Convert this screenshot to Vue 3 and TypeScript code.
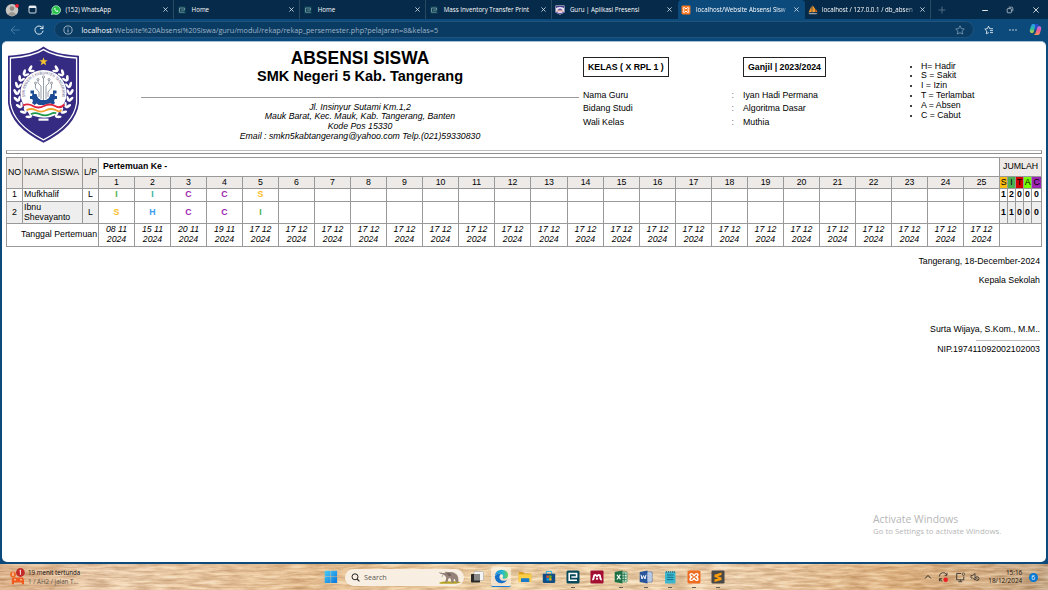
<script setup lang="ts">
interface Tab { title: string; icon: string; active?: boolean }
interface Student { no: number; name: string; gender: string; marks: string[]; totals: number[] }

const tabs: Tab[] = [
  { title: '(152) WhatsApp', icon: 'wa' },
  { title: 'Home', icon: 'e' },
  { title: 'Home', icon: 'e' },
  { title: 'Mass Inventory Transfer Print', icon: 'e' },
  { title: 'Guru | Aplikasi Presensi', icon: 'school' },
  { title: 'localhost/Website Absensi Sisw', icon: 'xampp', active: true },
  { title: 'localhost / 127.0.0.1 / db_absen', icon: 'pma' },
]

const legend = ['H= Hadir', 'S = Sakit', 'I = Izin', 'T = Terlambat', 'A = Absen', 'C = Cabut']
const info = [
  ['Nama Guru', 'Iyan Hadi Permana'],
  ['Bidang Studi', 'Algoritma Dasar'],
  ['Wali Kelas', 'Muthia'],
]
const meetings = Array.from({ length: 25 }, (_, i) => i + 1)
const dates = meetings.map((n) => ['08 11', '15 11', '20 11', '19 11'][n - 1] ?? '17 12')
const totalHeads = ['S', 'I', 'T', 'A', 'C']
const students: Student[] = [
  { no: 1, name: 'Mufkhalif', gender: 'L', marks: ['I', 'I2', 'C', 'C', 'S'], totals: [1, 2, 0, 0, 0] },
  { no: 2, name: 'Ibnu Shevayanto', gender: 'L', marks: ['S', 'H', 'C', 'C', 'I'], totals: [1, 1, 0, 0, 0] },
]
const leaves = [-62, -47, -32, -17, -2, 13, 28, 43, 58]
</script>

<template>
  <div class="screen">
    <div class="tabbar">
      <div class="profile">
        <svg width="14" height="14" viewBox="0 0 14 14">
          <circle cx="7" cy="7.2" r="6.2" fill="#c9c5c1" />
          <circle cx="7" cy="5.6" r="2.3" fill="#8d8984" />
          <path d="M2.8 11.4Q7 6.6 11.2 11.4Q7 14.4 2.8 11.4Z" fill="#9b9792" />
          <circle cx="12" cy="2.8" r="1.9" fill="#f0202c" />
        </svg>
      </div>
      <div class="workspace">
        <svg width="9" height="9" viewBox="0 0 9 9"><rect x="1" y="1" width="7" height="7" rx="1" fill="none" stroke="#e8eef4" stroke-width=".9" /><rect x="1" y="1" width="7" height="2" fill="#e8eef4" /></svg>
      </div>
      <div v-for="(t, i) in tabs" :key="i" class="tab" :class="{ active: t.active, pre: i === 4 }">
        <svg v-if="t.icon === 'wa'" class="fav" width="10" height="10" viewBox="0 0 10 10">
          <path d="M.5 9.5L1.2 7A4.4 4.4 0 1 1 3 8.9Z" fill="#25c34a" stroke="#eafff0" stroke-width=".6" />
          <path d="M3.3 3Q3 6.4 6.9 7L7.3 5.9L6 5.3L5.4 5.8Q4.6 5.4 4.2 4.6L4.6 4L4.1 2.8Z" fill="#fff" />
        </svg>
        <svg v-else-if="t.icon === 'e'" class="fav" width="10" height="10" viewBox="0 0 10 10">
          <rect x="1" y="1" width="8" height="8" rx="1" fill="#083b50" />
          <path d="M7.7 7.2H2.5V3H7.5V5.1H3.8" fill="none" stroke="#7899a1" stroke-width=".9" />
        </svg>
        <svg v-else-if="t.icon === 'school'" class="fav" width="10" height="10" viewBox="0 0 10 10">
          <path d="M.5 .6H9.5V7.5L5 9.8L.5 7.5Z" fill="#e9e4f4" />
          <path d="M1 1H9V3Q5 .8 1 3ZM1 6.6Q5 10 9 6.6V7.4L5 9.4L1 7.4Z" fill="#4b3b91" />
          <path d="M2.2 5.2Q5 1.6 7.8 5.2Z" fill="#66539a" /><path d="M1.8 6.2Q5 5.4 8.2 6.2" stroke="#d07350" stroke-width=".8" fill="none" />
        </svg>
        <svg v-else-if="t.icon === 'xampp'" class="fav" width="10" height="10" viewBox="0 0 14 14">
          <rect x=".8" y=".8" width="12.4" height="12.4" rx="1.6" fill="#fb7a24" />
          <path d="M4.6 7Q3 6.2 3 4.8Q3 3.6 4.4 3.6Q5.6 3.6 7 5.6Q8.4 3.6 9.6 3.6Q11 3.6 11 4.8Q11 6.2 9.4 7Q11 7.8 11 9.2Q11 10.4 9.6 10.4Q8.4 10.4 7 8.4Q5.6 10.4 4.4 10.4Q3 10.4 3 9.2Q3 7.8 4.6 7Z" fill="none" stroke="#fff" stroke-width="1.4" />
        </svg>
        <svg v-else class="fav" width="10" height="10" viewBox="0 0 10 10">
          <path d="M.5 7.5L3.5 1L3.8 7ZM4.2 7L4.4 .5Q7.5 2.5 7.5 7Z" fill="#f29a2e" /><path d="M7.7 7L7.3 3.5Q9 5 9.3 7Z" fill="#e0701c" /><path d="M.4 8.2Q5 7.2 9.6 8.2L8.4 9.3H1.5Z" fill="#9ba4ab" />
        </svg>
        <span class="tab-title" :class="{ fade: i > 4 }">{{ t.title }}</span>
        <svg class="close" width="5" height="5" viewBox="0 0 5 5"><path d="M.4 .4L4.6 4.6M4.6 .4L.4 4.6" stroke="#dce7f0" stroke-width=".8" /></svg>
      </div>
      <div class="plus"><svg width="8" height="8" viewBox="0 0 8 8"><path d="M4 .5V7.5M.5 4H7.5" stroke="#6c8399" stroke-width=".7" /></svg></div>
      <div class="winctl">
        <svg width="8" height="8" viewBox="0 0 8 8"><path d="M1.2 4.5H6.8" stroke="#fff" stroke-width=".9" /></svg>
        <svg width="8" height="8" viewBox="0 0 8 8"><rect x="1.2" y="2.6" width="4.2" height="4.2" rx=".7" fill="none" stroke="#d2dce5" stroke-width=".7" /><path d="M2.7 1.2H5.7Q6.8 1.2 6.8 2.3V5.3" fill="none" stroke="#d2dce5" stroke-width=".7" /></svg>
        <svg width="8" height="8" viewBox="0 0 8 8"><path d="M1.4 1.4L6.6 6.6M6.6 1.4L1.4 6.6" stroke="#fff" stroke-width=".8" /></svg>
      </div>
    </div>

    <div class="toolbar">
      <svg class="back" width="10" height="10" viewBox="0 0 10 10"><path d="M5 1L1 5L5 9M1 5H9.6" fill="none" stroke="#4a7da5" stroke-width=".9" /></svg>
      <svg class="reload" width="10" height="10" viewBox="0 0 10 10"><path d="M8.8 3.5A4.1 4.1 0 1 0 9.1 5.6M9 .6V3.6H6" fill="none" stroke="#f2f7fb" stroke-width=".9" /></svg>
      <div class="address">
        <svg class="infoicon" width="10" height="10" viewBox="0 0 10 10"><circle cx="5" cy="5" r="4.1" fill="none" stroke="#d7e3ed" stroke-width=".7" /><path d="M5 4.4V7.3M5 2.7V3.5" stroke="#d7e3ed" stroke-width=".8" /></svg>
        <span class="url"><b>localhost</b>/Website%20Absensi%20Siswa/guru/modul/rekap/rekap_persemester.php?pelajaran=8&amp;kelas=5</span>
        <svg class="star" width="10" height="10" viewBox="0 0 10 10"><path d="M5 .8L6.3 3.6L9.3 4L7.1 6.1L7.7 9.1L5 7.7L2.3 9.1L2.9 6.1L.7 4L3.7 3.6Z" fill="none" stroke="#7f9db5" stroke-width=".8" /></svg>
      </div>
      <svg class="fav-list" width="10" height="10" viewBox="0 0 10 10"><path d="M4.8 7.5L2.3 8.8L2.8 6L.8 4.1L3.4 3.7L4.5 1.2L5.7 3.7H9M6 5.6H9M6 7.6H9" fill="none" stroke="#f2f7fb" stroke-width=".8" /></svg>
      <svg class="more" width="10" height="4" viewBox="0 0 10 4"><circle cx="2" cy="2" r=".65" fill="#fff" /><circle cx="5" cy="2" r=".65" fill="#fff" /><circle cx="8" cy="2" r=".65" fill="#fff" /></svg>
      <svg class="copilot" width="13" height="13" viewBox="0 0 13 13">
        <defs>
          <linearGradient id="cpa" x1="0" y1="0" x2="0" y2="1"><stop offset="0" stop-color="#259cf2" /><stop offset=".55" stop-color="#2dbd9c" /><stop offset="1" stop-color="#d8d33d" /></linearGradient>
          <linearGradient id="cpb" x1="0" y1="0" x2="0" y2="1"><stop offset="0" stop-color="#a674ed" /><stop offset=".5" stop-color="#ee5b98" /><stop offset="1" stop-color="#fa9550" /></linearGradient>
        </defs>
        <path d="M4 1H8.3Q6.8 1.4 6 4.3L4.9 8.4Q4.4 10 3 10Q.5 10 .8 7L2 2.9Q2.5 1 4 1Z" fill="url(#cpa)" />
        <path d="M9 12H4.7Q6.2 11.6 7 8.7L8.1 4.6Q8.6 3 10 3Q12.5 3 12.2 6L11 10.1Q10.5 12 9 12Z" fill="url(#cpb)" />
        <path d="M5.3 1H8Q9.5 1 9.8 3Q8.5 3.2 8.1 4.6L7.5 6.5H5.5L6 4.3Q6.3 2.2 5.3 1Z" fill="#254fca" />
      </svg>
    </div>

    <main class="page">
      <header class="head">
        <svg class="logo" width="71" height="97" viewBox="0 0 71 97">
          <path d="M35.5 .4Q45 8 71 9.7V57Q68 81 35.5 96.7Q3 81 0 57V9.7Q26 8 35.5 .4Z" fill="#352b82" />
          <path d="M35.5 3.6Q46 10.5 68.6 12V57Q65.5 78.5 35.5 93.8Q5.5 78.5 2.4 57V12Q25 10.5 35.5 3.6Z" fill="none" stroke="#fff" stroke-width="1.3" />
          <path d="M35.5 11.3L36.6 14.2H39.8L37.3 16.1L38.2 19.2L35.5 17.4L32.8 19.2L33.7 16.1L31.2 14.2H34.4Z" fill="#f4c52d" />
          <circle cx="35.5" cy="47" r="23.1" fill="#fff" />
          <g fill="#fff">
            <g v-for="a in leaves" :key="a">
              <ellipse cx="7.4" cy="47" rx="1.4" ry="3.2" :transform="`rotate(${-a} 35.5 47) rotate(-32 7.4 47)`" />
              <ellipse cx="10.6" cy="47" rx="1.2" ry="3" :transform="`rotate(${-a} 35.5 47) rotate(24 10.6 47)`" />
              <ellipse cx="63.6" cy="47" rx="1.4" ry="3.2" :transform="`rotate(${a} 35.5 47) rotate(32 63.6 47)`" />
              <ellipse cx="60.4" cy="47" rx="1.2" ry="3" :transform="`rotate(${a} 35.5 47) rotate(-24 60.4 47)`" />
            </g>
          </g>
          <path id="sealArc" d="M17.2 51A18.7 18.7 0 1 1 53.8 51" fill="none" />
          <text class="seal"><textPath href="#sealArc" textLength="66" lengthAdjust="spacingAndGlyphs">SMK NEGERI 5 KABUPATEN TANGERANG</textPath></text>
          <path d="M24.5 47.5H22.5V44.5H26V48H29Q30 54 35.5 54T42 48H45V44.5H48.5V47.5H46.5L47 50H49V53H46.8L46 55L47 57L44.5 59L42.5 57.5L40 59H31L28.5 57.5L26.5 59L24 57L25 55L24.2 53H22V50H24Z" fill="#1d4a94" />
          <path d="M28.5 45.5Q28 54 35.5 54T42.5 45.5Z" fill="#fff" />
          <path d="M35.5 54V31M33 53V40L30 37V34M38 53V40L41 37V34M31 51V46L27.5 42V37.5M40 51V46L43.5 42V37.5" fill="none" stroke="#7d8896" stroke-width=".8" />
          <g fill="#fff" stroke="#59636f" stroke-width=".6"><circle cx="35.5" cy="31" r="1.1" /><circle cx="30" cy="33.5" r="1" /><circle cx="41" cy="33.5" r="1" /><circle cx="27.5" cy="37" r="1" /><circle cx="43.5" cy="37" r="1" /></g>
          <path d="M15 59Q20 56 25 59T36 59T47 59T56 59L52.5 64Q45 74 30 71Q19 69 15 59Z" fill="#fff" />
          <path d="M15 59.5Q20 57 25 60T36 60T47 60T56.5 58.5" fill="none" stroke="#e0243c" stroke-width="1.9" />
          <path d="M18.5 64.3Q23 61.7 28 64.3T38 64.3T48 64.3T53 63.6" fill="none" stroke="#f2a12d" stroke-width="1.8" />
          <path d="M23 68.3Q27 66 32 68.2T42 68.2T48 67.6" fill="none" stroke="#1c9a4b" stroke-width="1.8" />
          <path d="M30.5 72.5H40.5V74.7H30.5Z" fill="#fff" />
        </svg>
        <div class="titles">
          <h1>ABSENSI SISWA</h1>
          <h2>SMK Negeri 5 Kab. Tangerang</h2>
          <div class="line"></div>
          <address>
            <span>Jl. Insinyur Sutami Km.1,2</span>
            <span>Mauk Barat, Kec. Mauk, Kab. Tangerang, Banten</span>
            <span>Kode Pos 15330</span>
            <span>Email : smkn5kabtangerang@yahoo.com Telp.(021)59330830</span>
          </address>
        </div>
        <div class="info">
          <div class="badges">
            <div class="badgecell"><span class="badge b1">KELAS ( X RPL 1 )</span></div>
            <div><span class="badge b2">Ganjil | 2023/2024</span></div>
          </div>
          <div v-for="r in info" :key="r[0]" class="inforow"><span>{{ r[0] }}</span><span class="colon">:</span><span>{{ r[1] }}</span></div>
        </div>
        <ul class="legend"><li v-for="l in legend" :key="l"><span>{{ l }}</span></li></ul>
      </header>
      <div class="rule"></div>

      <table class="grid">
        <colgroup>
          <col class="c-no"><col class="c-name"><col class="c-lp">
          <col v-for="m in meetings" :key="m" :class="m === 13 ? 'c-wide' : 'c-day'">
          <col v-for="(t, i) in totalHeads" :key="t" :class="i === 4 ? 'c-last' : 'c-total'">
        </colgroup>
        <tbody>
          <tr class="r1">
            <td rowspan="2" class="shade">NO</td><td rowspan="2" class="shade namehead">NAMA SISWA</td><td rowspan="2" class="shade">L/P</td>
            <td colspan="25" class="meet"><b>Pertemuan Ke -</b></td>
            <td colspan="5" class="shade">JUMLAH</td>
          </tr>
          <tr class="r2">
            <td v-for="m in meetings" :key="m" class="shade">{{ m }}</td>
            <td v-for="t in totalHeads" :key="t" :class="'t-' + t">{{ t }}</td>
          </tr>
          <tr v-for="s in students" :key="s.no" :class="'s' + s.no">
            <td class="zebra">{{ s.no }}</td><td class="zebra name">{{ s.name }}</td><td class="zebra">{{ s.gender }}</td>
            <td v-for="m in meetings" :key="m" class="mark" :class="s.marks[m - 1] ? 'm-' + s.marks[m - 1] : ''">{{ (s.marks[m - 1] ?? '').charAt(0) }}</td>
            <td v-for="(n, i) in s.totals" :key="i" class="zebra total">{{ n }}</td>
          </tr>
          <tr class="r5">
            <td colspan="3" class="datelabel">Tanggal Pertemuan</td>
            <td v-for="(d, i) in dates" :key="i" class="date">{{ d }}<br>2024</td>
            <td colspan="5"></td>
          </tr>
        </tbody>
      </table>

      <div class="sign">
        <p>Tangerang, 18-December-2024</p>
        <p class="g2">Kepala Sekolah</p>
        <p class="g3">Surta Wijaya, S.Kom., M.M..</p>
        <div class="signline"></div>
        <p class="g4">NIP.197411092002102003</p>
      </div>
      <div class="watermark"><div class="w1">Activate Windows</div><div class="w2">Go to Settings to activate Windows.</div></div>
    </main>

    <footer class="taskbar">
      <svg class="wood" width="1048" height="26">
        <defs>
          <filter id="grain" x="0" y="0" width="100%" height="100%" color-interpolation-filters="sRGB">
            <feTurbulence type="fractalNoise" baseFrequency=".045 .34" numOctaves="4" seed="8" />
            <feColorMatrix values=".8 0 0 0 .46  1 0 0 0 .24  1.1 0 0 0 .06  0 0 0 0 1" />
          </filter>
          <linearGradient id="woodtone"><stop offset="0" stop-color="#d8a77c" /><stop offset=".1" stop-color="#efd1b1" /><stop offset=".3" stop-color="#e8bd8b" /><stop offset=".5" stop-color="#f2d7aa" /><stop offset=".7" stop-color="#eed0ac" /><stop offset=".86" stop-color="#dca970" /><stop offset=".94" stop-color="#d0a77b" /><stop offset="1" stop-color="#b79a78" /></linearGradient>
        </defs>
        <rect width="1048" height="26" filter="url(#grain)" />
        <rect width="1048" height="26" fill="url(#woodtone)" opacity=".62" />
      </svg>
      <div class="task-row">
        <div class="widget">
          <svg width="18" height="18" viewBox="0 0 18 18">
            <circle cx="4" cy="6.4" r="3" fill="#eb6b27" /><path d="M4 4.5V8" stroke="#fff" stroke-width=".9" />
            <path d="M3.5 9.5H14L15 12V16.2H12.8V14.6H5V16.2H2.8V12Z" fill="#f05a1f" /><path d="M5 11.8H7M11 11.8H13" stroke="#ffdcbc" />
            <circle cx="11.4" cy="4.5" r="4.4" fill="#c52a2a" /><path d="M11.4 2V6.8M10.6 2.8L11.4 2.1" stroke="#fff" stroke-width=".9" />
          </svg>
          <div class="wtext"><div>19 menit tertunda</div><div class="dim">1 / AH2 / Jalan T...</div></div>
        </div>
        <svg class="start" width="14" height="14" viewBox="0 0 14 14"><defs><linearGradient id="winb" x1="0" y1="0" x2="1" y2="1"><stop offset="0" stop-color="#48cdf7" /><stop offset="1" stop-color="#0875dc" /></linearGradient></defs><path d="M.7 .7H6.6V6.6H.7ZM7.1 .7H13.1V6.6H7.1ZM.7 7.1H6.6V13.1H.7ZM7.1 7.1H13.1V13.1H7.1Z" fill="url(#winb)" /></svg>
        <div class="search">
          <svg width="9" height="9" viewBox="0 0 9 9"><circle cx="4" cy="3.8" r="3" fill="none" stroke="#252525" stroke-width="1" /><path d="M6.1 6L8.4 8.4" stroke="#252525" stroke-width="1.1" /></svg>
          <span>Search</span>
          <svg class="beast" width="24" height="14" viewBox="0 0 24 14">
            <path d="M1 12.8Q5 10.7 12 11.5Q20 10.7 23 12.6L18 13.8H2Z" fill="#b7a421" />
            <path d="M.5 2.2Q4 3.2 7 2.8L8 1.4L10 2.4Q15 1 18 4Q21 6 20.3 12.5H18L16.7 8.7L15.7 9.4V12.7H13.5L12.6 8.5L10.8 8.1L9.2 12.6H7.2L8.3 7.4Q7 5.3 4.7 4.3Q2.3 4.2 .5 2.2Z" fill="#95837a" />
            <path d="M9 3.5Q10.5 7 13 5.3Q12.4 2.8 10 2.6ZM5 4.4L3.8 7.2" fill="#75665f" stroke="#5d514d" stroke-width=".4" />
          </svg>
        </div>
        <div class="apps">
          <span class="app"><svg width="14" height="14" viewBox="0 0 14 14"><rect x="4" y="1.5" width="9.5" height="9" rx=".7" fill="#f4f4f4" stroke="#999" stroke-width=".5" /><rect x="1" y="4" width="9" height="8.5" rx=".7" fill="#292929" /><rect x="4" y="4" width="6" height="6.5" fill="#8a8988" /></svg></span>
          <span class="app selected"><svg width="15" height="15" viewBox="0 0 15 15"><defs><linearGradient id="edge1"><stop offset="0" stop-color="#168ddd" /><stop offset=".6" stop-color="#29bacc" /><stop offset="1" stop-color="#69d54d" /></linearGradient></defs><path d="M.8 7.2Q1.5 .9 7.6 .8Q14.1 1 14.1 6.3Q14 9.8 10 9.8Q8 9.8 8.3 8.7Q9 8 8.7 6.5Q7.5 4.2 4.5 4.8Q2.2 5.2 .8 7.2Z" fill="url(#edge1)" /><path d="M.8 7.2Q3.5 4 7 5.1Q4.5 7 5.9 10Q8.1 13.2 13 10.9Q10.7 14.3 7.2 14.2Q1 13.7 .8 7.2Z" fill="#1570c9" /><path d="M6.5 7Q6.8 5.1 8.3 5.5Q9.3 6.9 8.3 8.7Q8 10 10 10.5Q7.5 10.5 6.5 7Z" fill="#fff2e3" /></svg></span>
          <span class="app"><svg width="14" height="14" viewBox="0 0 14 14"><path d="M.7 2H5L6.4 3.4H13.2V12H.7Z" fill="#dc9d1e" /><path d="M.7 4.3H13.2V12H.7Z" fill="#fbcf45" /><path d="M3 9Q3 8.2 3.8 8.2H10.5Q11.3 8.2 11.3 9V12H3Z" fill="#197bc9" /></svg></span>
          <span class="app"><svg width="14" height="14" viewBox="0 0 14 14"><path d="M4.3 4V1.4H9.7V4" fill="none" stroke="#28aeea" stroke-width="1" /><path d="M.8 3.7H13.2V11.5Q13.2 13 11.8 13H2.2Q.8 13 .8 11.5Z" fill="#104d87" /><path d="M4.5 5.5H6.8V7.8H4.5Z" fill="#f35325" /><path d="M7.2 5.5H9.5V7.8H7.2Z" fill="#81bc06" /><path d="M4.5 8.2H6.8V10.5H4.5Z" fill="#05a6f0" /><path d="M7.2 8.2H9.5V10.5H7.2Z" fill="#ffba08" /></svg></span>
          <span class="app open"><svg width="14" height="14" viewBox="0 0 14 14"><rect x=".5" y=".5" width="13" height="13" rx="1.5" fill="#07495b" /><path d="M11 10.2H3.2V3.5H10.6V7H5.4" fill="none" stroke="#fff" stroke-width="1.6" /></svg></span>
          <span class="app"><svg width="14" height="14" viewBox="0 0 14 14"><rect x=".5" y=".5" width="13" height="13" rx=".8" fill="#a30e33" /><path d="M2.2 9.6Q3.8 9.4 3.8 7Q3.8 5 5.2 5Q6.2 5 7 6.2Q7.8 5 8.8 5Q10.2 5 10.2 7Q10.2 9.4 11.8 9.6" fill="none" stroke="#fff" stroke-width="1.8" /><circle cx="7" cy="8.8" r="1.1" fill="#fff" /></svg></span>
          <span class="app open"><svg width="14" height="14" viewBox="0 0 14 14"><path d="M6 2H13V12H6Z" fill="#e4efe6" stroke="#2e8a59" stroke-width=".7" /><path d="M8 4.2H12.5M8 7H12.5M8 9.7H12.5M10.2 2.5V11.7" stroke="#257c50" /><path d="M.7 2L8.5 .5V13.5L.7 12Z" fill="#1d7044" /><path d="M3 4.8L6.5 9.3M6.3 4.6L3 9.5" stroke="#fff" stroke-width="1.2" /></svg></span>
          <span class="app open"><svg width="14" height="14" viewBox="0 0 14 14"><path d="M6 2H13V12H6Z" fill="#f2f5fb" stroke="#315fa6" stroke-width=".7" /><path d="M9 4H12M9 6H12M9 8H12M9 10H12" stroke="#507ab9" stroke-width=".7" /><path d="M.7 2L8.5 .5V13.5L.7 12Z" fill="#28569c" /><path d="M2 4.8L3 9L4.5 5.6L6 9L7 4.8" fill="none" stroke="#fff" /></svg></span>
          <span class="app open"><svg width="14" height="14" viewBox="0 0 14 14"><rect x="2" y="1.5" width="10.5" height="12" rx=".8" fill="#3bb6cc" /><path d="M3.5 1V3M5.5 1V3M7.5 1V3M9.5 1V3M11.3 1V3" stroke="#3b6d78" stroke-width=".8" /><path d="M4 5H10.5M4 7.3H10.5M4 9.6H10.5" stroke="#126c86" stroke-width=".9" /></svg></span>
          <span class="app open"><svg width="14" height="14" viewBox="0 0 14 14"><rect x=".5" y=".5" width="13" height="13" rx="1.6" fill="#ef6b20" /><path d="M4.6 7Q3 6.2 3 4.8Q3 3.6 4.4 3.6Q5.6 3.6 7 5.6Q8.4 3.6 9.6 3.6Q11 3.6 11 4.8Q11 6.2 9.4 7Q11 7.8 11 9.2Q11 10.4 9.6 10.4Q8.4 10.4 7 8.4Q5.6 10.4 4.4 10.4Q3 10.4 3 9.2Q3 7.8 4.6 7Z" fill="none" stroke="#fff" stroke-width="1.4" /></svg></span>
          <span class="app open"><svg width="14" height="14" viewBox="0 0 14 14"><rect x=".5" y=".5" width="13" height="13" rx="1.3" fill="#484848" /><path d="M10.5 2.5V5L6.6 6.2L10.5 7.4V10L3.5 12V9.6L7.5 8.3L3.5 7V4.7Z" fill="#ff9d0a" /></svg></span>
        </div>
        <div class="tray">
          <svg width="8" height="8" viewBox="0 0 8 8"><path d="M1 5.5L4 2.5L7 5.5" fill="none" stroke="#222" stroke-width="1" /></svg>
          <svg width="11" height="11" viewBox="0 0 11 11"><path d="M1.2 4.7A4.1 4.1 0 0 1 9 3M9 .8V3.3H6.5M1.7 6.5Q2.2 8.7 4.2 9.3M1.5 9.2V6.7H4" fill="none" stroke="#3b352f" stroke-width=".9" /><circle cx="7.7" cy="7.8" r="2.2" fill="#f11b23" /></svg>
          <svg width="11" height="11" viewBox="0 0 11 11"><path d="M6.3 1.5H1.7V7.8H8.8V4.5M3.3 9.7H7.3M5.3 7.8V9.5" fill="none" stroke="#333" stroke-width=".9" /><circle cx="8.5" cy="2.2" r="1.2" fill="none" stroke="#333" stroke-width=".7" /></svg>
          <svg class="sound" width="10" height="10" viewBox="0 0 10 10"><path d="M1 3.5H2.7L5 1.5V8L2.7 6H1Z" fill="none" stroke="#333" stroke-width=".8" /><circle cx="7" cy="6.6" r="2" fill="#c39c71" stroke="#333" stroke-width=".7" /><path d="M5.6 5.2L8.4 8" stroke="#333" stroke-width=".7" /></svg>
          <div class="clock"><div>15:16</div><div>18/12/2024</div></div>
          <span class="count">6</span>
        </div>
      </div>
    </footer>
  </div>
</template>

<style>
body { margin: 0; overflow: hidden; }
</style>

<style scoped>
* { box-sizing: border-box; }
.screen { width: 1048px; height: 590px; background: #0c4a7c; display: flex; flex-direction: column; overflow: hidden; font-family: "Liberation Sans", Arial, sans-serif; font-size: 8.75px; color: #000; }
svg { display: block; flex: none; }
.tabbar { height: 19px; display: flex; align-items: center; background: #062a49; font-family: "Open Sans", sans-serif; font-size: 6.5px; color: #fff; flex: none; }
.profile { width: 28px; padding-left: 5px; }
.workspace { width: 20px; }
.tab { width: 126.1px; height: 19px; display: flex; align-items: center; border-right: 1px solid #294862; padding: 0 5px 0 3px; flex: none; }
.tab.pre { border-right-color: transparent; }
.tab.active { background: #0c4a7c; border-right-color: transparent; border-radius: 4px 4px 0 0; }
.tab-title { flex: 1; margin-left: 4.5px; margin-right: 5px; white-space: nowrap; line-height: 11px; padding-bottom: 1px; font-size: 6.2px; font-weight: 500; }
.fade { mask-image: linear-gradient(90deg, #000 88%, rgba(0, 0, 0, .3)); }
.plus { margin-left: 7px; }
.winctl { display: flex; gap: 17.4px; margin-left: auto; padding-right: 8.5px; }
.toolbar { height: 21.5px; display: flex; align-items: center; flex: none; background: #0c4a7c; }
.back { margin-left: 10px; }
.reload { margin-left: 14px; }
.address { margin-left: 10px; width: 919.5px; height: 17px; border-radius: 9px; background: #0a3b63; border: 1px solid #20537d; display: flex; align-items: center; padding: 0 8px; font-family: "Open Sans", sans-serif; font-size: 7.27px; color: #9eb3c5; }
.url { margin-left: 8.5px; white-space: nowrap; }
.url b { font-weight: 500; color: #fff; }
.star { margin-left: auto; }
.fav-list { margin-left: 10.5px; }
.more { margin-left: 14px; }
.copilot { margin-left: 11px; }
.page { position: relative; margin: 0 2px 0; height: 521px; flex: none; background: #fff; border-radius: 5px; padding: 5px 4px 0; border-top: .5px solid #a9bfd3; }
.head { display: flex; height: 103px; }
.logo { margin-left: 2px; margin-top: -.5px; }
.titles { margin-left: 62px; width: 438px; text-align: center; }
h1 { margin: 1px 0 0; font-size: 17.47px; line-height: 20px; }
h2 { margin: -1px 0 0; font-size: 14.5px; line-height: 18px; }
.line { margin-top: 12px; height: 1px; background: #999; }
address { margin-top: 5px; line-height: 9.8px; display: flex; flex-direction: column; align-items: center; white-space: nowrap; }
.info { margin-left: 4px; width: 327px; padding-top: 10px; }
.badges { display: flex; height: 32px; }
.badgecell { width: 160px; }
.badge { display: inline-block; border: 1.5px solid #222; height: 20px; line-height: 18.5px; padding: 0 4px; font-weight: bold; white-space: nowrap; }
.b1 { width: 86px; }
.b2 { width: 83px; }
.inforow { display: grid; grid-template-columns: 148.5px 11.5px auto; height: 13.9px; line-height: 12px; }
.colon { color: #777; }
.legend { margin: 15px 0 0; padding: 0 0 0 11px; line-height: 9.9px; height: 60px; white-space: nowrap; font-size: 8.75px; }
.legend li::marker { font-size: 7px; }
.rule { height: 4px; border: 1px solid #8e8e8e; border-top-color: #bdbdbd; }
.grid { border-collapse: collapse; table-layout: fixed; width: 1036px; margin-top: 3.5px; line-height: 9.8px; text-align: center; border: 1px solid #c4c4c4; }
.c-no, .c-lp { width: 16px; }
.c-name { width: 60px; }
.c-day { width: 36px; }
.c-wide { width: 37px; }
.c-total { width: 8px; }
.c-last { width: 10px; }
td { border: 1px solid #999; padding: 0; white-space: nowrap; }
.r1 { height: 19px; }
.r2 { height: 12px; }
.s1 { height: 13px; }
.s2 { height: 22px; }
.r5 { height: 23px; }
.shade { background: #edeae7; }
.s2 .zebra { background: #eeeeee; }
.meet { text-align: left; padding-left: 4px; }
.namehead { text-align: left; padding-left: 1px; }
.name { text-align: left; padding-left: 1px; white-space: normal; }
.mark, .total { font-weight: bold; }
.m-I { color: #4caf50; }
.m-I2 { color: #35b39b; }
.m-C { color: #9c27b0; }
.m-S { color: #fbbc1d; }
.m-H { color: #3b9cf0; }
.t-S { background: #f9bd14; }
.t-I { background: #4caf50; }
.t-T { background: #d40000; }
.t-A { background: #76ff03; }
.t-C { background: #9c27b0; }
.datelabel { text-align: right; padding-right: 1px; }
.date { font-style: italic; }
.sign { display: flex; flex-direction: column; align-items: flex-end; padding: 9px 2px 0 0; }
.sign p { margin: 0; line-height: 10px; white-space: nowrap; }
.sign .g2 { padding-top: 9px; }
.sign .g3 { padding-top: 39px; }
.signline { width: 64px; height: 1px; background: #bbb; margin-top: 5.5px; }
.sign .g4 { padding-top: 3px; }
.watermark { position: absolute; left: 871px; top: 470px; font-family: "Open Sans", sans-serif; color: #b6b6b6; white-space: nowrap; }
.w1 { font-size: 10.4px; line-height: 15px; }
.w2 { font-size: 7.83px; line-height: 9px; }
.taskbar { margin-top: auto; height: 26px; display: grid; flex: none; overflow: hidden; }
.wood, .task-row { grid-area: 1 / 1; }
.task-row { z-index: 1; height: 26px; display: flex; align-items: center; font-family: "Open Sans", sans-serif; font-size: 6.4px; }
.widget { width: 324px; display: flex; align-items: center; padding-left: 9px; }
.wtext { margin-left: 1px; line-height: 9px; font-size: 6.2px; white-space: nowrap; color: #111; }
.dim { color: #5d544c; }
.search { margin-left: 7px; width: 119px; height: 17px; border-radius: 9px; background: #f8eee1; display: flex; align-items: center; padding: 0 2px 0 6px; color: #5b5855; font-size: 7.2px; }
.search span { margin-left: 4px; }
.beast { margin-left: auto; }
.apps { display: flex; margin-left: 1px; }
.app { width: 24.08px; height: 24px; display: flex; align-items: center; justify-content: center; }
.selected { background: rgba(255, 248, 239, .6); width: 20px; height: 20px; margin: 2px; border-radius: 2px; border-bottom: 1px solid #197bd8; }
.open { background: linear-gradient(#665f58, #665f58) 50% 22px / 4px 1px no-repeat; }
.tray { margin-left: auto; display: flex; align-items: center; gap: 6.3px; padding-right: 10.5px; }
.sound { margin-left: -2px; }
.clock { text-align: right; line-height: 8.5px; margin-left: 1.5px; font-size: 6.4px; color: #1b1814; white-space: nowrap; }
.count { width: 9px; height: 9px; border-radius: 50%; background: #0878d1; color: #fff; text-align: center; line-height: 9px; font-size: 6.5px; }
.seal { font-size: 4px; fill: #5e5a83; }
</style>
